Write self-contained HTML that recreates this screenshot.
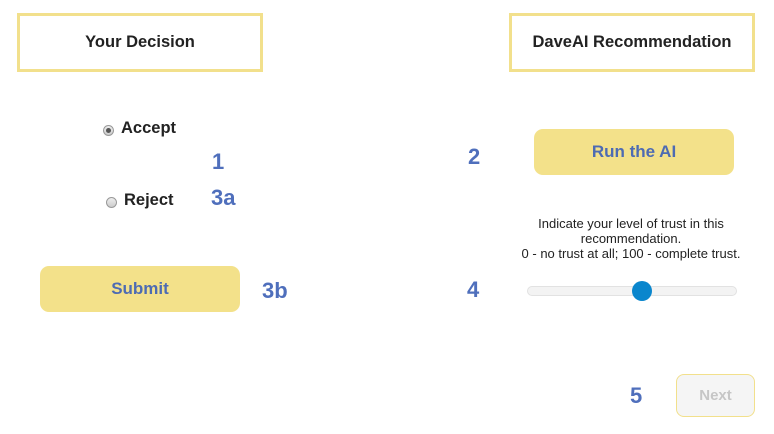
<!DOCTYPE html>
<html><head><style>
body{margin:0;width:774px;height:434px;background:#fff;position:relative;font-family:"Liberation Sans",sans-serif;overflow:hidden}
.a{position:absolute}
.box{border:3px solid #f2e08c;box-sizing:border-box;display:flex;align-items:center;justify-content:center;font-weight:bold;font-size:16.5px;color:#222}
.btn{background:#f3e18a;border-radius:9px;display:flex;align-items:center;justify-content:center;font-weight:bold;font-size:17px;color:#4d6bb3}
.n{color:#4f6fbc;font-weight:bold;font-size:22px;line-height:1}
.r{width:11px;height:11px;border-radius:50%;border:1px solid #999;background:linear-gradient(#eee,#ccc);box-sizing:border-box}
.lbl{font-weight:bold;font-size:16.5px;color:#222}
</style></head><body>
<div class="a box" style="left:17px;top:13px;width:246px;height:59px">Your Decision</div>
<div class="a box" style="left:509px;top:13px;width:246px;height:59px">DaveAI Recommendation</div>
<div class="a r" style="left:103px;top:125px"><div style="width:5px;height:5px;background:#555;border-radius:50%;margin:2px"></div></div>
<div class="a lbl" style="left:121px;top:119px">Accept</div>
<div class="a r" style="left:106px;top:197px"></div>
<div class="a lbl" style="left:124px;top:191px">Reject</div>
<div class="a n" style="left:212px;top:151px">1</div>
<div class="a n" style="left:211px;top:187px">3a</div>
<div class="a btn" style="left:40px;top:266px;width:200px;height:46px">Submit</div>
<div class="a n" style="left:262px;top:280px">3b</div>
<div class="a n" style="left:468px;top:146px">2</div>
<div class="a btn" style="left:534px;top:129px;width:200px;height:46px">Run the AI</div>
<div class="a" style="left:480px;top:216px;width:302px;text-align:center;font-size:13px;line-height:15px;color:#222">Indicate your level of trust in this<br>recommendation.<br>0 - no trust at all; 100 - complete trust.</div>
<div class="a n" style="left:467px;top:279px">4</div>
<div class="a" style="left:527px;top:286px;width:210px;height:10px;border-radius:5px;background:#f3f3f3;border:1px solid #e2e2e2;box-sizing:border-box"></div>
<div class="a" style="left:632px;top:281px;width:20px;height:20px;border-radius:50%;background:#0a86cd"></div>
<div class="a n" style="left:630px;top:385px">5</div>
<div class="a" style="left:676px;top:374px;width:79px;height:43px;box-sizing:border-box;border:1px solid #f2e08c;border-radius:8px;background:#f5f5f5;display:flex;align-items:center;justify-content:center;font-weight:bold;font-size:15px;color:#c6c6c6">Next</div>
</body></html>
